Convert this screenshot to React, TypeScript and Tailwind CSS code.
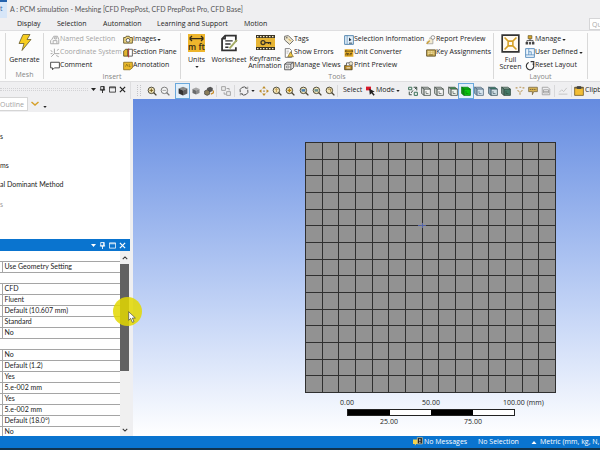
import type { ReactNode } from "react"

interface IconProps {
  children: ReactNode
  className?: string
}

// All icons are drawn on a 16x16 grid
function Icon({ children, className = "size-[10px]" }: IconProps) {
  return (
    <svg viewBox="0 0 16 16" fill="none" className={`shrink-0 ${className}`} aria-hidden="true">
      {children}
    </svg>
  )
}

function Caret({ className = "h-[3px] w-[5px]" }: { className?: string }) {
  return (
    <svg viewBox="0 0 10 6" className={`shrink-0 ${className}`} aria-hidden="true">
      <path d="M0 0H10L5 6Z" fill="currentColor" />
    </svg>
  )
}

const icons = {
  named: (
    <Icon>
      <path d="M3 7L6 2H12L14 7V14H1V9Z M5 14V9H11V14 M6 5H11" stroke="#a9a9a9" strokeWidth="1.5" />
      <circle cx="9" cy="5" r="2" stroke="#a9a9a9" />
    </Icon>
  ),
  coordinate: (
    <Icon>
      <path d="M7 1V9H15 M7 9L2 14 M1 4L4 6 M1 9H4 M11 4L14 2 M10 12L14 14" stroke="#a9a9a9" strokeWidth="1.6" />
    </Icon>
  ),
  comment: (
    <Icon>
      <path d="M1 2H15V11H7L4 14V11H1Z" stroke="#444" strokeWidth="1.5" fill="#fff" />
    </Icon>
  ),
  images: (
    <Icon>
      <path d="M1 4H4L5 2H10L11 4H15V13H1Z" fill="#eed47c" stroke="#554b25" strokeWidth="1.3" />
      <circle cx="8" cy="8.5" r="3" fill="#fff" stroke="#444" strokeWidth="1.3" />
    </Icon>
  ),
  section: (
    <Icon>
      <path d="M1 5L4 2H8V13H1Z" fill="#e2b32d" stroke="#554b25" strokeWidth="1.3" />
      <path d="M8 2H15V13H8Z" fill="#fff" stroke="#444" strokeWidth="1.3" />
      <path d="M9 1V15" stroke="#a33" strokeWidth="1.6" />
    </Icon>
  ),
  annotation: (
    <Icon>
      <path d="M1 2H15V11L11 14H1Z" fill="#eab92b" stroke="#806416" strokeWidth="1.2" />
      <path d="M4 9L6 5L8 9M10 5V9H12" stroke="#765c10" />
    </Icon>
  ),
  tag: (
    <Icon>
      <path d="M1 2L7 1L15 9L9 15L1 8Z" fill="#efe7cb" stroke="#555" strokeWidth="1.3" />
      <circle cx="4.5" cy="4.5" r="1.2" fill="#555" />
      <path d="M7 6L11 10" stroke="#c8982a" strokeWidth="1.4" />
    </Icon>
  ),
  errors: (
    <Icon>
      <path d="M2 1H9L12 4V15H2Z" fill="#fff" stroke="#666" strokeWidth="1.3" />
      <path d="M4 5H8M4 8H7" stroke="#888" />
      <path d="M10.5 6L15 14H6Z" fill="#f0c744" stroke="#6e5b20" />
    </Icon>
  ),
  views: (
    <Icon>
      <path d="M1 5L5 2H15V11L11 14H1Z M1 5H11V14 M11 5L15 2" fill="#f1f1f1" stroke="#444" strokeWidth="1.3" />
      <path d="M4 8H8V11H4Z" stroke="#666" />
    </Icon>
  ),
  selInfo: (
    <Icon>
      <path d="M1 1H15V15H1Z" fill="#e5f1fb" stroke="#467ba8" strokeWidth="1.4" />
      <path d="M5 1V15" stroke="#467ba8" />
      <path d="M8 4V10L12 8Z" fill="#234" />
      <path d="M8 13H13" stroke="#234" strokeWidth="1.4" />
    </Icon>
  ),
  converter: (
    <Icon>
      <path d="M1 2H15V14H1Z" fill="#e7ad23" />
      <path d="M2 5H14M2 5L4 3M2 5L4 7M14 5L12 3M14 5L12 7M3 12V9H8V12M5.5 9V12M11 8V12M10 9H13" stroke="#493a16" strokeWidth="1.2" />
    </Icon>
  ),
  print: (
    <Icon>
      <path d="M1 7H13V14H1Z" fill="#b88923" stroke="#403517" strokeWidth="1.2" />
      <path d="M4 7V3H10V7" fill="#fff" stroke="#444" strokeWidth="1.2" />
      <circle cx="11" cy="4" r="3" fill="#e9e2c8" stroke="#555" />
      <path d="M4 11H10" stroke="#fff" strokeWidth="1.5" />
    </Icon>
  ),
  report: (
    <Icon>
      <path d="M5 5H11V14H2V10" fill="#f3ead0" stroke="#999" strokeWidth="1.2" />
      <circle cx="11" cy="4" r="3" fill="#fff" stroke="#777" strokeWidth="1.2" />
      <path d="M1 14L6 9" stroke="#c99b31" strokeWidth="2" />
    </Icon>
  ),
  keys: (
    <Icon>
      <path d="M1 3H15V13H1Z" fill="#d3b65d" stroke="#5b4d25" strokeWidth="1.4" />
      <path d="M3 6H13M3 8.5H13" stroke="#fff6d5" strokeDasharray="1.5 1" strokeWidth="1.3" />
      <path d="M5 11H11" stroke="#5b4d25" />
    </Icon>
  ),
  manage: (
    <Icon>
      <path d="M5 1H11V6H5Z" fill="#d9a527" stroke="#554b25" />
      <path d="M8 6V9M3 11V9H13V11" stroke="#333" strokeWidth="1.3" />
      <path d="M1 11H5V15H1Z M6.5 11H9.5V15H6.5Z M11 11H15V15H11Z" fill="#444" />
    </Icon>
  ),
  userDefined: (
    <Icon>
      <path d="M1 1H15V15H1Z" fill="#edf5fd" stroke="#4e86b9" strokeWidth="1.4" />
      <path d="M6 1V11M1 11H15M6 6H10V11" stroke="#4e86b9" strokeWidth="1.2" />
    </Icon>
  ),
  reset: (
    <Icon>
      <path d="M6 2.5A6 6 0 1 0 12.5 4" stroke="#333" strokeWidth="1.8" />
      <path d="M9 1H14V6" stroke="#333" strokeWidth="1.8" />
    </Icon>
  ),
}

function Magnifier({ muted, children }: { muted?: boolean; children?: ReactNode }) {
  return (
    <Icon>
      <circle cx="7" cy="7" r="5.2" fill={muted ? "#f4f4f4" : "#f2e5b8"} stroke={muted ? "#777" : "#4b4636"} strokeWidth="1.5" />
      <path d="M10.5 10.5L15 15" stroke={muted ? "#777" : "#4b4636"} strokeWidth="2.2" />
      {children}
    </Icon>
  )
}

function Cube({ top, front, side, line = "#47514b" }: { top: string; front: string; side: string; line?: string }) {
  return (
    <Icon>
      <g stroke={line} strokeWidth="1.3" strokeLinejoin="round">
        <path d="M1 2H11L15 5H5Z" fill={top} />
        <path d="M1 2L5 5V15L1 12Z" fill={side} />
        <path d="M5 5H15V15H5Z" fill={front} />
      </g>
      <path d="M8 8V12H12" stroke={line} />
    </Icon>
  )
}

function ShadedCube({ className }: { className?: string }) {
  return (
    <Icon className={className}>
      <path d="M8 1L15 4L8 7L1 4Z" fill="#888" />
      <path d="M1 4L8 7V15L1 12Z" fill="#333" />
      <path d="M15 4L8 7V15L15 12Z" fill="#5e5e5e" />
    </Icon>
  )
}

function Command({ icon, label, menu, disabled }: { icon: ReactNode; label: string; menu?: boolean; disabled?: boolean }) {
  return (
    <button disabled={disabled} className="flex h-[13px] items-center whitespace-nowrap disabled:text-[#a3a3a3]">
      {icon}
      <span>{label}</span>
      {menu && <Caret className="ml-px h-[2px] w-[4px]" />}
    </button>
  )
}

function Group({ label, className, children }: { label: string; className: string; children: ReactNode }) {
  return (
    <section aria-label={label} className={`flex shrink-0 flex-col border-r border-[#d9d9d9] ${className}`}>
      <div className="flex h-[39px]">{children}</div>
      <div className="text-center leading-[9px] text-[#858585]">{label}</div>
    </section>
  )
}

function Ribbon() {
  return (
    <div className="flex h-[52px] shrink-0 overflow-hidden border-y border-[#dedee0] bg-[#fcfcfc] pt-[2px] pb-[2px]">
      <div className="w-[6px] shrink-0 border-r border-[#d9d9d9]" />
      <Group label="Mesh" className="w-[38px]">
        <button className="flex w-full flex-col items-center">
          <Icon className="h-[19px] w-[16px]">
            <path d="M6 0H13L10 5H14L5 16L7 9H2Z" fill="#f7cd1f" stroke="#665b2b" strokeWidth="0.8" />
          </Icon>
          <span className="mt-[3px] leading-[9px]">Generate</span>
        </button>
      </Group>
      <Group label="Insert" className="w-[137px]">
        <div className="ml-[6px] w-[73px]">
          <Command icon={icons.named} label="Named Selection" disabled />
          <Command icon={icons.coordinate} label="Coordinate System" disabled />
          <Command icon={icons.comment} label="Comment" />
        </div>
        <div>
          <Command icon={icons.images} label="Images" menu />
          <Command icon={icons.section} label="Section Plane" />
          <Command icon={icons.annotation} label="Annotation" />
        </div>
      </Group>
      <Group label="Tools" className="w-[313px]">
        <button className="flex w-[31px] flex-col items-center">
          <svg viewBox="0 0 34 36" className="mt-px h-[18px] w-[17px]" aria-hidden="true">
            <path d="M0 0H34V36H0Z" fill="#eeb62d" />
            <path d="M3 9H31M3 9L8 4M3 9L8 14M31 9L26 4M31 9L26 14" stroke="#342b16" strokeWidth="2.5" fill="none" />
            <text x="17" y="31" textAnchor="middle" fontSize="17" fontWeight="600" fill="#342b16">m ft</text>
          </svg>
          <span className="mt-[3px] leading-[9px]">Units</span>
          <Caret className="mt-[2px] h-[2px] w-[4px]" />
        </button>
        <button className="flex w-[34px] flex-col items-center">
          <Icon className="mt-px h-[18px] w-[17px]">
            <path d="M14 7V1H4L1 4V15H14V12" fill="#fff" stroke="#333" strokeWidth="1.7" />
            <path d="M1 4H4V1M4 6H11M4 9H9M4 12H7" stroke="#333" strokeWidth="1.3" />
            <path d="M8 13L15 5" stroke="#a5ad66" strokeWidth="1.8" />
          </Icon>
          <span className="mt-[3px] leading-[9px]">Worksheet</span>
        </button>
        <button className="flex w-[38px] flex-col items-center">
          <svg viewBox="0 0 38 30" className="mt-[2px] h-[15px] w-[19px]" aria-hidden="true">
            <path d="M0 0H38V30H0Z" fill="#3b3525" />
            <path d="M0 6H38V24H0Z" fill="#e7b535" />
            <path d="M2 3H38M2 27H38" stroke="#f5e9c5" strokeWidth="2.5" strokeDasharray="3 3" />
            <circle cx="14" cy="15" r="4" fill="none" stroke="#3b3525" strokeWidth="2.5" />
            <path d="M18 15H29V19M25 15V18" stroke="#3b3525" strokeWidth="2.5" fill="none" />
          </svg>
          <span className="mt-[5px] leading-[7px]">Keyframe Animation</span>
        </button>
        <div className="w-[60px]">
          <Command icon={icons.tag} label="Tags" />
          <Command icon={icons.errors} label="Show Errors" />
          <Command icon={icons.views} label="Manage Views" />
        </div>
        <div className="w-[82px]">
          <Command icon={icons.selInfo} label="Selection Information" />
          <Command icon={icons.converter} label="Unit Converter" />
          <Command icon={icons.print} label="Print Preview" />
        </div>
        <div>
          <Command icon={icons.report} label="Report Preview" />
          <Command icon={icons.keys} label="Key Assignments" />
        </div>
      </Group>
      <Group label="Layout" className="w-[94px]">
        <button className="ml-[2px] flex w-[29px] flex-col items-center">
          <Icon className="mt-px size-[19px]">
            <path d="M1 1H15V15H1Z" fill="#fffaf0" stroke="#333" strokeWidth="1.4" />
            <path d="M6 6H10V10H6Z M3 3L6 6M13 3L10 6M3 13L6 10M13 13L10 10" stroke="#d5a025" strokeWidth="1.3" />
          </Icon>
          <span className="mt-[3px] leading-[7px]">Full Screen</span>
        </button>
        <div>
          <Command icon={icons.manage} label="Manage" menu />
          <Command icon={icons.userDefined} label="User Defined" menu />
          <Command icon={icons.reset} label="Reset Layout" />
        </div>
      </Group>
    </div>
  )
}

function Tool({ label, active, children }: { label: string; active?: boolean; children: ReactNode }) {
  return (
    <button
      aria-label={label}
      className={`flex h-[14px] flex-1 items-center justify-center ${active ? "bg-[#e2effa] outline outline-[#69a8dc]" : ""}`}
    >
      {children}
    </button>
  )
}

const Divider = () => <div className="h-[12px] w-px shrink-0 bg-[#d8d8da]" />

function GraphicsToolbar() {
  return (
    <div className="flex h-[17px] shrink-0 items-center overflow-hidden border-l border-[#dddddf]">
      <div className="ml-[6px] grid h-[12px] w-[4px] shrink-0 grid-cols-2 gap-px text-[#c4c4c8]">
        {Array.from({ length: 12 }, (_, i) => (
          <span key={i} className="size-px bg-current" />
        ))}
      </div>
      <div className="ml-[4px] flex w-[27px] shrink-0">
        <Tool label="Zoom in"><Magnifier><path d="M4 7H10M7 4V10" stroke="#6b5413" strokeWidth="1.4" /></Magnifier></Tool>
        <Tool label="Zoom out"><Magnifier muted><path d="M4 7H10" stroke="#777" /></Magnifier></Tool>
      </div>
      <div className="ml-[4px] flex w-[40px] shrink-0">
        <Tool label="Shaded with edges" active><ShadedCube /></Tool>
        <Tool label="Shaded"><ShadedCube className="size-[8px] opacity-70" /></Tool>
        <Tool label="Rotate cube">
          <Icon>
            <path d="M5 3L10 1L14 3V8L9 10L5 8Z" fill="#555" />
            <path d="M1 8L5 6L9 8V13L5 15L1 13Z" fill="#8a7d5a" stroke="#333" />
            <path d="M11 13L15 11V7" stroke="#c78c25" strokeWidth="1.8" />
          </Icon>
        </Tool>
      </div>
      <Divider />
      <div className="mx-[2px] flex w-[13px] shrink-0">
        <Tool label="Copy view">
          <Icon>
            <path d="M1 1H7V7H1Z M9 9H15V15H9Z M5 10V13H8 M9 4H13V7" stroke="#949494" strokeWidth="1.3" fill="#eee" />
          </Icon>
        </Tool>
      </div>
      <Divider />
      <div className="ml-[2px] flex w-[13px] shrink-0">
        <Tool label="Rotate">
          <Icon>
            <path d="M2 10A6.3 6.3 0 0 1 12.5 3.5M14 6A6.3 6.3 0 0 1 3.5 12.5" stroke="#555" strokeWidth="1.6" />
            <path d="M10 4H14V1M6 12H2V15" stroke="#777" strokeWidth="1.2" />
          </Icon>
        </Tool>
      </div>
      <Caret className="mr-[2px] ml-px h-[2px] w-[4px]" />
      <div className="flex w-[80px] shrink-0">
        <Tool label="Pan">
          <Icon>
            <path d="M8 0L11 4H5Z M8 16L11 12H5Z M0 8L4 5V11Z M16 8L12 5V11Z" fill="#bd8c27" />
            <path d="M7 7H9V9H7Z" fill="#806020" />
          </Icon>
        </Tool>
        <Tool label="Zoom"><Magnifier><path d="M7 4V10M5 6L7 4L9 6" stroke="#a77519" /></Magnifier></Tool>
        <Tool label="Box zoom"><Magnifier><path d="M4 7H10M7 4V10" stroke="#b5810e" strokeWidth="2" /></Magnifier></Tool>
        <Tool label="Zoom to fit"><Magnifier><path d="M4 5H10V9H4Z" fill="#477eb3" /></Magnifier></Tool>
        <Tool label="Zoom to selection"><Magnifier><path d="M4 5H10V9H4Z" fill="#668e91" /></Magnifier></Tool>
        <Tool label="Previous view"><Magnifier><path d="M5 5H9V9" stroke="#9a7a34" strokeWidth="1.4" /></Magnifier></Tool>
      </div>
      <Divider />
      <span className="ml-[5px] w-[23px] shrink-0">Select</span>
      <button className="flex w-[40px] shrink-0 items-center">
        <Icon>
          <path d="M0 1H8V7H0Z" fill="#d8192b" />
          <path d="M5 4L14 9L10.5 10L14 14L12 15.5L9 11.5L6 14Z" fill="#222" />
        </Icon>
        <span className="mr-px">Mode</span>
        <Caret className="h-[2px] w-[4px]" />
      </button>
      <div className="mr-px flex w-[147px] shrink-0">
        <Tool label="Smart select">
          <Icon>
            <path d="M1 2H6V6H1Z M10 10H15V15H10Z" stroke="#3c7259" strokeWidth="1.6" />
            <path d="M9 2L14 2M11 5L14 2V7M2 9V14H6M8 7L5 11" stroke="#3f5047" strokeWidth="1.6" />
          </Icon>
        </Tool>
        <Tool label="Vertex"><Cube top="#eee" front="#f5f5f5" side="#ddd" /></Tool>
        <Tool label="Edge"><Cube top="#eee" front="#f5f5f5" side="#d3d9d5" /></Tool>
        <Tool label="Face"><Cube top="#35b548" front="#f0f5ef" side="#d3d9d5" /></Tool>
        <Tool label="Body" active><Cube top="#13d51b" front="#06c90e" side="#079b0d" line="#087610" /></Tool>
        <Tool label="Node"><Cube top="#bcd1e2" front="#d6e4ef" side="#94afc3" line="#526a7e" /></Tool>
        <Tool label="Element face"><Cube top="#368761" front="#d0dfe6" side="#94afc3" line="#3d5962" /></Tool>
        <Tool label="Element"><Cube top="#bad3c6" front="#447c6a" side="#739387" line="#30493f" /></Tool>
        <Tool label="Coordinates">
          <Icon>
            <path d="M1 3H4M7 2H10M12 3H15M4 7L7 9M12 7L9 9M8 10V14" stroke="#ba985b" strokeWidth="1.7" />
          </Icon>
        </Tool>
        <Tool label="Label">
          <Icon>
            <path d="M1 2H15V9H9L7 14V9H1Z" fill="#d8b454" stroke="#746440" strokeWidth="1.2" />
            <path d="M3 5.5H13" stroke="#5a4c2b" strokeWidth="1.2" strokeDasharray="2 1" />
          </Icon>
        </Tool>
        <Tool label="Extend">
          <Icon>
            <path d="M2 2H11L14 5V14H2Z M4 6H12V11H4Z M4 9H12" stroke="#9a9a9a" strokeWidth="1.3" />
          </Icon>
        </Tool>
      </div>
      <Divider />
      <div className="mx-px flex w-[14px] shrink-0">
        <Tool label="Chart">
          <Icon><path d="M1 13H15M2 10L6 6L9 9L14 3" stroke="#bcbcbc" strokeWidth="1.3" /></Icon>
        </Tool>
      </div>
      <Divider />
      <button className="ml-[2px] flex shrink-0 items-center gap-px">
        <Icon>
          <path d="M1 2H15V15H1Z" fill="#f2bd35" stroke="#755e25" strokeWidth="1.3" />
          <path d="M1 3H15M5 1H11V4H5Z" fill="#444" stroke="#444" strokeWidth="1.5" />
        </Icon>
        <span>Clipboard</span>
      </button>
    </div>
  )
}

function PanelButtons() {
  return (
    <div className="flex items-center gap-[3px]">
      <button aria-label="Panel menu"><Caret className="h-[3px] w-[5px]" /></button>
      <button aria-label="Pin">
        <Icon className="size-[7px]"><path d="M4 1H12V9H4ZM2 9H14M8 9V16M10 1V9" stroke="currentColor" strokeWidth="2" /></Icon>
      </button>
      <button aria-label="Maximize">
        <Icon className="size-[7px]"><path d="M1 2H15V14H1ZM1 4H15" stroke="currentColor" strokeWidth="1.8" /></Icon>
      </button>
      <button aria-label="Close">
        <Icon className="size-[7px]"><path d="M2 2L14 14M14 2L2 14" stroke="currentColor" strokeWidth="2.8" /></Icon>
      </button>
    </div>
  )
}

// null marks a category row that has no value cell
const details: Array<string | null> = [
  null,
  "Use Geometry Setting",
  null,
  "CFD",
  "Fluent",
  "Default (10.607 mm)",
  "Standard",
  "No",
  null,
  "No",
  "Default (1.2)",
  "Yes",
  "5.e-002 mm",
  "Yes",
  "5.e-002 mm",
  "Default (18.0°)",
  "No",
]

function Chevron({ up }: { up?: boolean }) {
  return (
    <Icon className="size-[6px]">
      <path d={up ? "M2 11L8 5L14 11" : "M2 5L8 11L14 5"} stroke="#333" strokeWidth="2.8" />
    </Icon>
  )
}

function SidePanels() {
  return (
    <aside className="flex w-[130px] shrink-0 flex-col">
      <div className="flex h-[14px] shrink-0 items-center justify-end gap-[3px] pr-[4px]">
        <div className="h-[3px] flex-1 border-y border-dotted border-[#d2d2d5]" />
        <PanelButtons />
      </div>
      <div className="flex h-[16px] shrink-0 items-center">
        <input
          aria-label="Search Outline"
          placeholder="Outline"
          className="h-[14px] w-[28px] border border-l-0 border-[#d5d5d5] bg-white placeholder:text-[#a3a3a3]"
        />
        <button aria-label="Expand search" className="ml-[3px] text-[#d5a02a]">
          <Icon className="size-[8px]"><path d="M1 4L8 10L15 4" stroke="currentColor" strokeWidth="3" /></Icon>
        </button>
        <Caret className="mt-[5px] ml-[4px] h-[2px] w-[4px]" />
      </div>
      <ul className="h-[127px] shrink-0 overflow-hidden bg-white pt-[19px] font-['Lato',sans-serif] leading-[10px]">
        <li className="h-[29px]">s</li>
        <li className="h-[19px]">ms</li>
        <li className="h-[20px]">al Dominant Method</li>
        <li className="text-[#999]">s</li>
      </ul>
      <div className="flex h-[12px] shrink-0 items-center justify-end bg-[#0a74cf] pr-[4px] text-white">
        <PanelButtons />
      </div>
      <div className="flex min-h-0 flex-1 overflow-hidden bg-white">
        <table className="flex-1 table-fixed border-collapse self-start font-['Lato',sans-serif] leading-[9px]">
          <colgroup>
            <col className="w-[2px]" />
            <col />
          </colgroup>
          <tbody>
            {details.map((value, index) =>
              value === null ? (
                <tr key={index} className="h-[11px] border-b border-[#a5a5a5] first:h-[10px]">
                  <td colSpan={2} className="p-0" />
                </tr>
              ) : (
                <tr key={index} className="h-[11px] border-b border-[#a5a5a5]">
                  <td className="border-r border-[#a5a5a5] p-0" />
                  <td className="py-0 pr-0 pl-[2px]">{value}</td>
                </tr>
              ),
            )}
          </tbody>
        </table>
        <div className="flex w-[10px] shrink-0 flex-col items-center bg-[#f0f0f0]">
          <button aria-label="Scroll up" className="flex h-[13px] items-center"><Chevron up /></button>
          <div className="flex w-full flex-1 flex-col">
            <div className="mr-px h-2/3 bg-[#626262]" />
          </div>
          <button aria-label="Scroll down" className="flex h-[12px] items-center"><Chevron /></button>
        </div>
      </div>
    </aside>
  )
}

function Mesh() {
  const cells = 15
  const size = 250
  const lines = Array.from({ length: cells + 1 }, (_, i) => Math.round((i * size) / cells) + 0.5)

  return (
    <svg viewBox="0 0 251 251" className="w-[251px]" role="img" aria-label="Mesh">
      <rect width="251" height="251" fill="#929292" />
      {lines.map((p) => (
        <path key={p} d={`M${p} 0V251M0 ${p}H251`} stroke="#2f2f2f" />
      ))}
      <path d="M113 83.5H121M117.5 81V86" stroke="#5262a8" />
    </svg>
  )
}

function ScaleBar() {
  return (
    <div className="mt-[5px] ml-[21px] w-[210px] leading-[10px]">
      <div className="flex">
        <span className="w-[42px] shrink-0 text-center">0.00</span>
        <span className="ml-[42px] w-[42px] shrink-0 text-center">50.00</span>
        <span className="ml-[51px] shrink-0 whitespace-nowrap">100.00 (mm)</span>
      </div>
      <div className="mt-px ml-[21px] flex h-[7px] w-[168px] border border-[#222] bg-white">
        <div className="w-1/4 bg-black" />
        <div className="w-1/4" />
        <div className="w-1/4 bg-black" />
      </div>
      <div className="mt-px flex pl-[42px]">
        <span className="w-[42px] text-center">25.00</span>
        <span className="ml-[42px] w-[42px] text-center">75.00</span>
      </div>
    </div>
  )
}

function StatusBar() {
  return (
    <footer className="flex h-[14px] shrink-0 items-center justify-end overflow-hidden border-b-2 border-[#10324d] bg-[#0a74cf] whitespace-nowrap text-white">
      <button className="flex w-[65px] items-center gap-px">
        <Icon>
          <path d="M0 4H9V11H5L3 14V11H0Z" fill="#f4d34c" />
          <path d="M7 1H15V11H7Z" fill="#222" stroke="#f1dfa0" />
          <path d="M11 3V7M11 8V10" stroke="#fff" strokeWidth="1.5" />
        </Icon>
        <span>No Messages</span>
      </button>
      <span className="w-[53px]">No Selection</span>
      <button className="flex w-[69px] items-center gap-[3px]">
        <Caret className="h-[3px] w-[6px] rotate-180" />
        <span>Metric (mm, kg, N, s, mV, mA)</span>
      </button>
    </footer>
  )
}

export default function App() {
  return (
    <div className="relative flex h-screen flex-col overflow-hidden bg-[#efeff1] font-['Open_Sans','Noto_Sans',sans-serif] text-[7px] text-[#222]">
      <header className="flex h-[18px] shrink-0 items-center">
        <div className="flex h-full w-[7px] flex-col border-t-2 border-[#2462ad] bg-[#d7e6f8] text-[#3563a0]">
          <span className="mt-px leading-[12px]">t</span>
        </div>
        <h1 className="ml-[3px] font-['Lato',sans-serif] whitespace-nowrap text-[#555]">
          A : PCM simulation - Meshing [CFD PrepPost, CFD PrepPost Pro, CFD Base]
        </h1>
      </header>
      <nav className="flex h-[12px] shrink-0 items-center font-medium whitespace-nowrap">
        <button className="ml-[17px] w-[40px] text-left">Display</button>
        <button className="w-[46px] text-left">Selection</button>
        <button className="w-[54px] text-left">Automation</button>
        <button className="w-[87px] text-left">Learning and Support</button>
        <button>Motion</button>
        <input
          aria-label="Quick Launch"
          placeholder="Quick Launch"
          className="ml-auto h-[12px] w-[11px] border border-r-0 border-[#d5d5d7] bg-white pl-[2px] placeholder:text-[#aaa]"
        />
      </nav>
      <Ribbon />
      <div className="flex min-h-0 flex-1">
        <SidePanels />
        <main className="flex min-w-0 flex-1 flex-col">
          <GraphicsToolbar />
          <div className="ml-[3px] flex-1 overflow-hidden bg-linear-to-b from-[#658be0] to-white pt-[43px] pl-[172px]">
            <Mesh />
            <ScaleBar />
          </div>
        </main>
      </div>
      <StatusBar />

      {/* Click highlight with the mouse pointer */}
      <div className="pointer-events-none absolute top-[297px] left-[113px] size-[29px] rounded-full bg-[#e3d800]/85" />
      <svg viewBox="0 0 12 18" className="pointer-events-none absolute top-[311px] left-[128px] h-[12px] w-[8px]" aria-hidden="true">
        <path d="M1 1V14L4 11L6.5 17L9 16L6.5 10.5H11Z" fill="#fff" stroke="#444" />
      </svg>
    </div>
  )
}
